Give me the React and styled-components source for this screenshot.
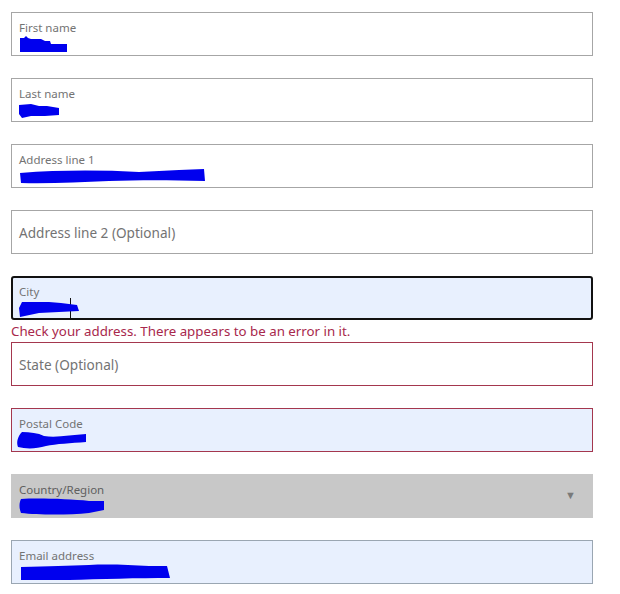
import React from 'react';
import styled, { createGlobalStyle } from 'styled-components';

const GlobalStyle = createGlobalStyle`
  body {
    margin: 0;
    background: #ffffff;
    font-family: "Noto Sans", "Open Sans", sans-serif;
  }
`;

const Form = styled.form`
  width: 582px;
  padding: 12px 0 0 11px;
  display: flex;
  flex-direction: column;
`;

const FieldWrap = styled.div`
  margin-bottom: ${(p) => (p.$tight ? '0' : '22px')};
`;

const Field = styled.div`
  position: relative;
  box-sizing: border-box;
  height: 44px;
  padding: 0 0 0 ${(p) => (p.$focused ? '6px' : '7px')};
  display: flex;
  flex-direction: column;
  justify-content: ${(p) => (p.$empty ? 'center' : 'flex-start')};
  border: ${(p) => {
    if (p.$focused) return '2px solid #111111';
    if (p.$error) return '1px solid #a4374e';
    if (p.$disabled) return '1px solid #c8c8c8';
    if (p.$filled) return '1px solid #9aa6b2';
    return '1px solid #a6a6a6';
  }};
  border-radius: ${(p) => (p.$focused ? '3px' : '0')};
  background: ${(p) => {
    if (p.$disabled) return '#c8c8c8';
    if (p.$autofill) return '#e8f0fe';
    return '#ffffff';
  }};
`;

const Label = styled.span`
  display: block;
  margin-top: ${(p) => (p.$focused ? '6px' : '7px')};
  font-size: 11.5px;
  line-height: 16px;
  color: ${(p) => (p.$disabled ? '#5f5f5f' : '#737373')};
`;

const Placeholder = styled.span`
  font-size: 13.6px;
  color: #737373;
`;

const Value = styled.div`
  position: relative;
  height: 18px;
`;

const Caret = styled.span`
  position: absolute;
  top: -2px;
  width: 1px;
  height: 20px;
  background: #111111;
`;

const ErrorText = styled.div`
  font-size: 13.3px;
  line-height: 22px;
  color: #a8284c;
`;

const Arrow = styled.span`
  position: absolute;
  right: 16px;
  top: 12px;
  font-size: 11px;
  color: #7a7a7a;
`;

const Scribble = ({ w, h, d, x = 0, y = 0 }) => (
  <svg
    width={w}
    height={h}
    viewBox={`0 0 ${w} ${h}`}
    style={{ position: 'absolute', left: x, top: y }}
  >
    <path d={d} fill="#0000ee" />
  </svg>
);

function App() {
  return (
    <>
      <GlobalStyle />
      <Form>
        <FieldWrap>
          <Field>
            <Label>First name</Label>
            <Value>
              <Scribble w={50} h={17} y={0} d="M1 2 L5 2 L7 0 L9 2 L12 3 L22 3 L26 5 L31 5 L32 8 L48 8 L48 16 L1 16 Z" />
            </Value>
          </Field>
        </FieldWrap>
        <FieldWrap>
          <Field>
            <Label>Last name</Label>
            <Value>
              <Scribble w={42} h={17} y={0} d="M0 3 L12 2 L20 4 L28 4 L40 6 L40 13 L26 14 L12 14 L3 16 L0 12 Z" />
            </Value>
          </Field>
        </FieldWrap>
        <FieldWrap>
          <Field>
            <Label>Address line 1</Label>
            <Value>
              <Scribble w={188} h={17} y={0} d="M1 5 C40 2 80 2 120 4 L140 3 L160 2 L185 1 L186 13 C150 12 120 12 90 13 C60 14 30 16 2 15 Z" />
            </Value>
          </Field>
        </FieldWrap>
        <FieldWrap>
          <Field $empty>
            <Placeholder>Address line 2 (Optional)</Placeholder>
          </Field>
        </FieldWrap>
        <FieldWrap $tight>
          <Field $focused $autofill>
            <Label $focused>City</Label>
            <Value>
              <Caret style={{ left: 51 }} />
              <Scribble w={62} h={18} y={0} d="M3 2 L30 2 L42 3 L58 5 L60 11 L40 12 L20 13 L1 17 L0 8 Z" />
            </Value>
          </Field>
          <ErrorText>Check your address. There appears to be an error in it.</ErrorText>
        </FieldWrap>
        <FieldWrap>
          <Field $error $empty>
            <Placeholder>State (Optional)</Placeholder>
          </Field>
        </FieldWrap>
        <FieldWrap>
          <Field $error $autofill>
            <Label>Postal Code</Label>
            <Value>
              <Scribble w={72} h={18} x={-3} y={0} d="M6 0 C14 0 22 1 28 4 C40 6 55 3 70 2 L70 10 C55 11 40 12 30 14 C20 17 10 17 2 15 C0 10 2 4 6 0 Z" />
            </Value>
          </Field>
        </FieldWrap>
        <FieldWrap>
          <Field $disabled>
            <Label $disabled>Country/Region</Label>
            <Value>
              <Scribble w={87} h={18} y={0} d="M2 1 C20 0 50 1 70 3 L85 3 L85 12 L70 15 C50 17 20 17 2 15 C0 10 0 5 2 1 Z" />
            </Value>
            <Arrow>▼</Arrow>
          </Field>
        </FieldWrap>
        <FieldWrap>
          <Field $filled $autofill>
            <Label>Email address</Label>
            <Value>
              <Scribble w={153} h={17} y={0} d="M2 3 C30 2 50 2 70 1 C90 0 110 1 130 2 L148 2 L151 14 C120 14 80 15 50 16 C30 16 15 16 2 16 Z" />
            </Value>
          </Field>
        </FieldWrap>
      </Form>
    </>
  );
}

export default App;
